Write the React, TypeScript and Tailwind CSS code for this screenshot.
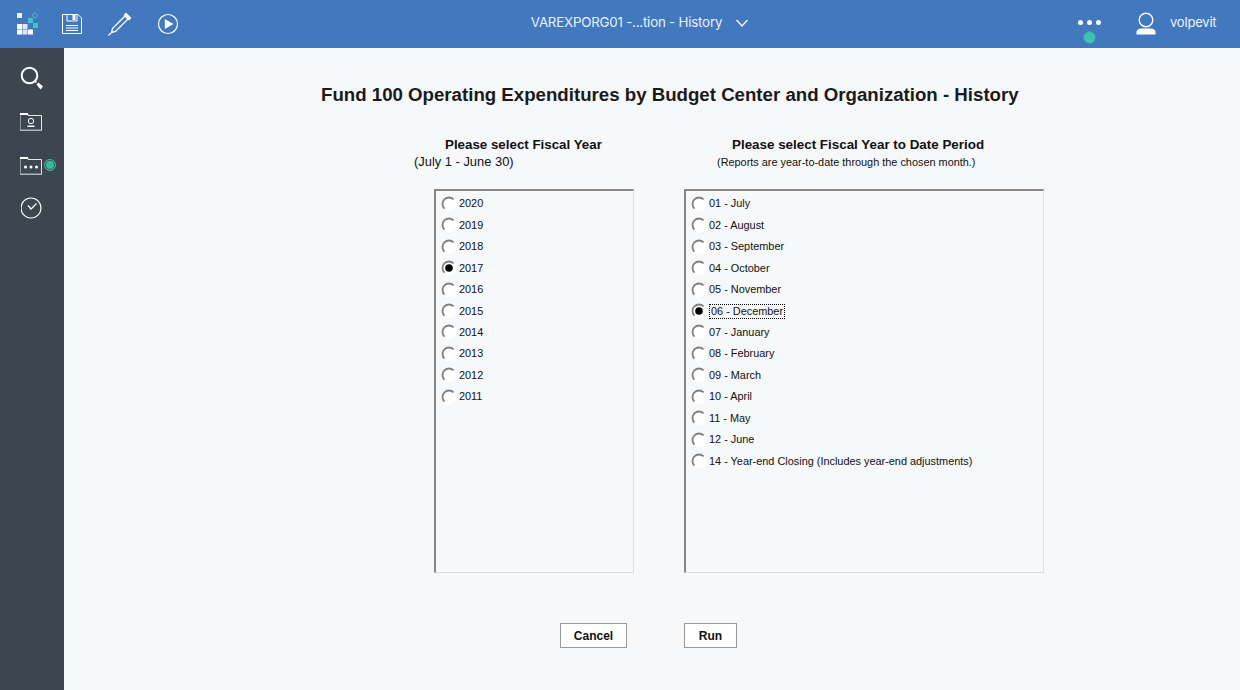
const years = ["2020", "2019", "2018", "2017", "2016", "2015", "2014", "2013", "2012", "2011"];
const periods = [
  "01 - July",
  "02 - August",
  "03 - September",
  "04 - October",
  "05 - November",
  "06 - December",
  "07 - January",
  "08 - February",
  "09 - March",
  "10 - April",
  "11 - May",
  "12 - June",
  "14 - Year-end Closing (Includes year-end adjustments)",
];

function Radio({ label, checked, focused }: { label: string; checked?: boolean; focused?: boolean }) {
  return (
    <div className="h-[21.45px] flex items-center">
      <svg width="16" height="16" viewBox="0 0 16 16" className="shrink-0">
        <circle cx="8" cy="8" r="7.5" fill="#fff" />
        <path d="M3.4 12.6A6.5 6.5 0 0 1 12.6 3.4" fill="none" stroke="#808080" strokeWidth="1.8" />
        {checked && <circle cx="8" cy="8" r="3.8" fill="#000" />}
      </svg>
      <span
        className={
          "px-[1px] text-[10.9px] leading-[13px] text-[#111] border border-dotted " +
          (focused ? "ml-[2px] border-black" : "ml-0 border-transparent")
        }
      >
        {label}
      </span>
    </div>
  );
}

function TopIcons() {
  return (
    <div className="flex items-center h-full">
      {/* logo */}
      <svg width="24" height="24" viewBox="0 0 24 24" className="ml-[16px]">
        <rect x="1" y="1" width="5" height="5" fill="#eef4fb" />
        <rect x="12" y="6" width="5" height="5" fill="#3fc6c0" />
        <rect x="17" y="1.5" width="4" height="4" fill="none" stroke="#66c8d8" strokeWidth="0.8" transform="rotate(45 19 3.5)" />
        <rect x="17" y="11" width="5" height="5" fill="#3fc6c0" />
        <rect x="1" y="12" width="5" height="5" fill="#fff" />
        <rect x="6.5" y="12" width="5" height="5" fill="#dfe8f4" />
        <rect x="1" y="17.5" width="5" height="5" fill="#fff" />
        <rect x="6.5" y="17.5" width="5" height="5" fill="#dfe8f4" />
        <rect x="12" y="17.5" width="5" height="5" fill="#fff" />
      </svg>
      {/* save */}
      <svg width="22" height="22" viewBox="0 0 22 22" className="ml-[21px]" fill="none" stroke="#fff" strokeWidth="1">
        <path d="M1.5 1.5H17L20.5 5V20.5H1.5Z" />
        <path d="M6 1.5V8H16V1.5" />
        <rect x="11.5" y="2" width="3" height="5" fill="#fff" stroke="none" />
        <path d="M5 12.5H17M5 15H17M5 17.5H17" />
      </svg>
      {/* pencil */}
      <svg width="26" height="26" viewBox="0 0 26 26" className="ml-[24px]" fill="none" stroke="#fff" strokeWidth="1.3">
        <path d="M5.5 17.5L18 5L21 8L8.5 20.5L4.5 21.5Z" />
        <path d="M19 2.5L23.5 7L22 8.5L17.5 4Z" fill="#fff" />
        <path d="M1.5 24.5L4 22" />
      </svg>
      {/* play */}
      <svg width="22" height="22" viewBox="0 0 22 22" className="ml-[24px]" fill="none" stroke="#fff" strokeWidth="1.2">
        <circle cx="11" cy="11" r="9.5" />
        <path d="M7.8 6V16L16.5 11Z" fill="#fff" stroke="none" />
      </svg>
    </div>
  );
}

function SideIcons() {
  return (
    <div className="flex flex-col items-center">
      {/* search */}
      <svg width="26" height="26" viewBox="0 0 26 26" className="mt-[17px]" fill="none">
        <circle cx="10.5" cy="10.5" r="7.8" stroke="#fff" strokeWidth="2" />
        <path d="M15.5 16.5L16.5 15.5L18 17L17 18Z" fill="#fff" />
        <path d="M17.5 19.5L19.5 17.5L24 21.5L21.5 24.5Z" fill="#fff" />
      </svg>
      {/* folder with person */}
      <svg width="24" height="20" viewBox="1 0 24 20" className="mt-[21px]" fill="none">
        <path d="M1 2H9V3.5H22.5V18.5H1Z" stroke="#e3e6ea" strokeWidth="1" />
        <rect x="1" y="1" width="8" height="2" fill="#fff" />
        <rect x="1" y="17.5" width="22" height="1.5" fill="#aeb4bb" />
        <circle cx="12" cy="9" r="2.7" stroke="#fff" strokeWidth="1" />
        <rect x="8.5" y="13.5" width="7" height="1.5" fill="#fff" />
      </svg>
      {/* folder with dots + status */}
      <div className="relative mt-[24px] w-[24px] h-[20px]">
        <svg width="24" height="20" viewBox="1 0 24 20" fill="none">
          <path d="M1 2H9V3.5H22.5V18.5H1Z" stroke="#e3e6ea" strokeWidth="1" />
          <rect x="1" y="1" width="8" height="2" fill="#fff" />
          <rect x="1" y="17.5" width="22" height="1.5" fill="#aeb4bb" />
          <circle cx="6.5" cy="11" r="1.5" fill="#fff" />
          <circle cx="12" cy="11" r="1.5" fill="#fff" />
          <circle cx="17.5" cy="11" r="1.5" fill="#fff" />
        </svg>
        <div className="absolute left-[24px] top-[3px] w-[12px] h-[12px] rounded-full bg-[#38b89c] border border-[#38b89c] shadow-[inset_0_0_0_1px_#3d464f]" />
      </div>
      {/* clock */}
      <svg width="22" height="22" viewBox="1 0 22 22" className="mt-[21px]" fill="none" stroke="#fff">
        <circle cx="11" cy="11" r="10" strokeWidth="1.2" />
        <path d="M8 8.5L11 12L16.5 6.5" strokeWidth="1.2" />
      </svg>
    </div>
  );
}

export default function App() {
  return (
    <div className="w-[1240px] h-[690px] flex flex-col overflow-hidden font-['Liberation_Sans',Arial,sans-serif] bg-[#f6f8fa]">
      <header className="h-12 shrink-0 bg-[#4178be] flex items-center text-white">
        <div className="w-[400px] h-full">
          <TopIcons />
        </div>
        <div className="w-[420px] mb-[2px] flex items-center justify-center font-['Inter',sans-serif] text-[13.3px] text-[#eaf1fa] tracking-[-0.2px]">
          <span className="ml-[60px]">VAREXPORG01 -...tion - History</span>
          <svg width="14" height="14" viewBox="0 0 14 14" className="ml-[13px]" fill="none" stroke="#fff" strokeWidth="1.3">
            <path d="M1.5 4L7 10L12.5 4" />
          </svg>
        </div>
        <div className="flex-1 flex items-center">
          <div className="relative mb-[3px] ml-[258px] w-[23px] flex justify-between">
            <span className="w-[5px] h-[5px] rounded-full bg-white" />
            <span className="w-[5px] h-[5px] rounded-full bg-white" />
            <span className="w-[5px] h-[5px] rounded-full bg-white" />
            <span className="absolute left-[5px] top-[11px] w-[13px] h-[13px] rounded-full bg-[#3fc1b5] border-[1.5px] border-[#2f9cab]" />
          </div>
          <svg width="20" height="23" viewBox="0 0 20 23" className="ml-[35px] mb-[1px]" fill="#fff">
            <circle cx="10" cy="8" r="6.8" fill="none" stroke="#fff" strokeWidth="1.4" />
            <path d="M0.5 22.5V20C0.5 18 3 16.5 5 16.5H15C17 16.5 19.5 18 19.5 20V22.5Z" />
          </svg>
          <span className="ml-[14px] mb-[2px] font-['Inter',sans-serif] text-[13px] text-[#eef3fa] tracking-[-0.2px]">volpevit</span>
        </div>
      </header>
      <div className="flex flex-1 min-h-0">
        <aside className="w-16 shrink-0 bg-[#3d464f]">
          <SideIcons />
        </aside>
        <main className="flex-1 pt-[35px]">
          <h1 className="ml-[257px] text-[18.67px] leading-6 font-bold text-[#1a1a1a]">
            Fund 100 Operating Expenditures by Budget Center and Organization - History
          </h1>
          <div className="mt-[30px] flex">
            <div className="ml-[350px] w-[270px] h-[46px]">
              <div className="ml-[31px] text-[13.33px] leading-[16px] font-bold text-[#111]">Please select Fiscal Year</div>
              <div className="mt-[2px] text-[12.9px] leading-[14px] text-[#111]">(July 1 - June 30)</div>
            </div>
            <div className="w-[360px]">
              <div className="ml-[48px] text-[13.4px] leading-[16px] font-bold text-[#111]">Please select Fiscal Year to Date Period</div>
              <div className="ml-[33px] mt-[2px] text-[10.9px] leading-[14px] text-[#111]">(Reports are year-to-date through the chosen month.)</div>
            </div>
          </div>
          <div className="mt-[6px] ml-[370px] flex gap-[50px]">
            <div className="w-[200px] h-[384px] border-2 border-t-[#888] border-l-[#888] border-r-[#dcdfe2] border-b-[#dcdfe2] border-r-[1px] border-b-[1px] pl-[5px] pt-[2.15px]">
              {years.map((y) => (
                <Radio key={y} label={y} checked={y === "2017"} />
              ))}
            </div>
            <div className="w-[360px] h-[384px] border-2 border-t-[#888] border-l-[#888] border-r-[#dcdfe2] border-b-[#dcdfe2] border-r-[1px] border-b-[1px] pl-[5px] pt-[2.15px]">
              {periods.map((p) => (
                <Radio key={p} label={p} checked={p === "06 - December"} focused={p === "06 - December"} />
              ))}
            </div>
          </div>
          <div className="mt-[50px] ml-[496px] flex gap-[57px]">
            <button className="w-[67px] h-[25px] bg-white border border-[#999] text-[12px] font-bold text-[#111]">Cancel</button>
            <button className="w-[53px] h-[25px] bg-white border border-[#999] text-[12px] font-bold text-[#111]">Run</button>
          </div>
        </main>
      </div>
    </div>
  );
}
